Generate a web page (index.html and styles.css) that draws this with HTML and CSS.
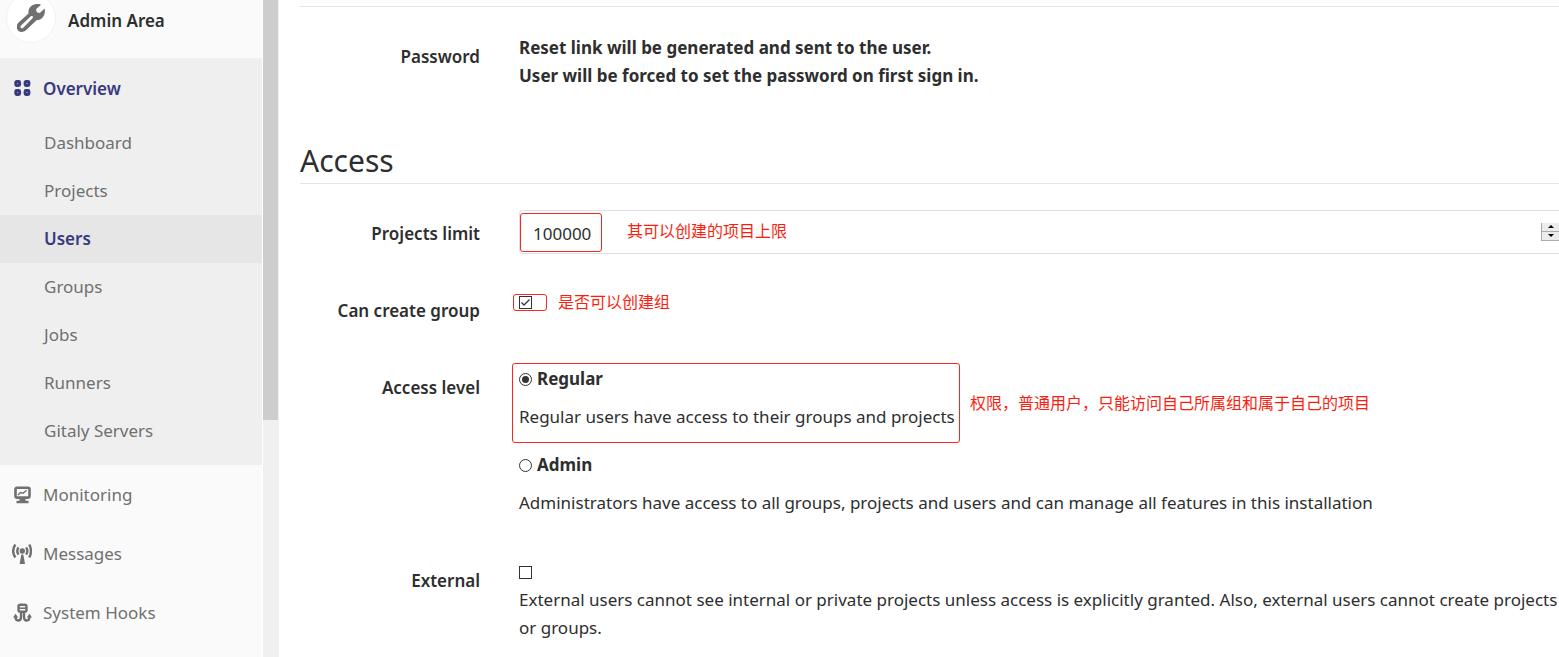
FILE: index.html
```html
<!DOCTYPE html>
<html lang="en">
<head>
<meta charset="utf-8">
<title>Admin Area</title>
<link rel="stylesheet" href="styles.css">
</head>
<body>
<div class="layout">
  <aside class="sidebar">
    <a class="sidebar-header" href="#">
      <span class="avatar">
        <svg width="28" height="28" viewBox="0 0 28 28" aria-hidden="true">
          <path fill="#707070" fill-rule="evenodd" d="M18 0.300C20 -0.300 22.500 -0.200 24 0.700L19 5.200L19.800 8.200L22.800 9L27.600 4.500C29 11 25 16.500 19.500 16.300L9 26.300C6.500 28.500 2.800 28.500 1 26.500C-1 24 -0.800 21 1.300 18.800L11.500 9.400C11 4.500 14 1.300 18 0.300ZM13.600 12.400L4.300 21.200C3.300 22.200 3.200 23.100 3.900 23.800C4.600 24.500 5.500 24.500 6.300 23.700L15.500 14.200C16.800 12.700 15.200 11.100 13.600 12.400Z"/>
        </svg>
      </span>
      <span class="sidebar-title">Admin Area</span>
    </a>
    <nav>
      <ul class="nav-list">
        <li class="nav-group">
          <a class="nav-link nav-link-active" href="#">
            <svg width="20" height="20" viewBox="0 0 20 20" fill="#9c9cc0" stroke="#393982" stroke-width="2.800" aria-hidden="true">
              <rect x="3.700" y="2.500" width="4" height="4" rx="1"/><rect x="13" y="2.500" width="4" height="4" rx="1"/>
              <rect x="3.700" y="11.500" width="4" height="4" rx="1"/><rect x="13" y="11.500" width="4" height="4" rx="1"/>
            </svg>
            Overview
          </a>
          <ul class="sub-list">
            <li><a class="sub-link" href="#">Dashboard</a></li>
            <li><a class="sub-link" href="#">Projects</a></li>
            <li><a class="sub-link sub-link-active" href="#">Users</a></li>
            <li><a class="sub-link" href="#">Groups</a></li>
            <li><a class="sub-link" href="#">Jobs</a></li>
            <li><a class="sub-link" href="#">Runners</a></li>
            <li><a class="sub-link" href="#">Gitaly Servers</a></li>
          </ul>
        </li>
        <li>
          <a class="nav-link" href="#">
            <svg width="20" height="20" viewBox="0 0 20 20" fill="none" stroke="#707070" aria-hidden="true">
              <rect x="3.500" y="2.800" width="14" height="9.800" rx="1.500" stroke-width="2.600"/>
              <path d="M6 10L8.500 7.500L11 8.200L14.500 5.200" stroke-width="1.500"/>
              <path d="M7.500 14.500h6M4.500 17h12" stroke-width="2.500"/>
            </svg>
            Monitoring
          </a>
        </li>
        <li>
          <a class="nav-link" href="#">
            <svg width="20" height="20" viewBox="0 0 20 20" fill="none" stroke="#707070" aria-hidden="true">
              <circle cx="10.300" cy="7" r="2.700" fill="#707070" stroke="none"/>
              <path d="M9.300 10.500h2l1.700 9.500h-5.400z" fill="#707070" stroke="none"/>
              <path d="M6.500 3.300Q4 7 6.500 10.700M14.100 3.300Q16.600 7 14.100 10.700M3.300 0.500Q-0.900 7 3.300 13.500M17.300 0.500Q20.700 7 17.300 13.500" stroke-width="2.400"/>
            </svg>
            Messages
          </a>
        </li>
        <li>
          <a class="nav-link" href="#">
            <svg width="20" height="20" viewBox="0 0 20 20" fill="none" stroke="#707070" aria-hidden="true">
              <rect x="6.500" y="1.700" width="8" height="7" rx="2" stroke-width="2.400"/>
              <path d="M6.500 5.200h8" stroke-width="1.600"/>
              <path d="M9 9.500v4.500Q9 17.500 6.200 17.500Q3.500 17.500 3.500 13.500M12 9.500v4.500Q12 17.500 14.800 17.500Q17.500 17.500 17.500 13.500" stroke-width="2.400"/>
              <path d="M1 14.500L3.500 10.800L6.300 14.500zM14.700 14.500L17.500 10.800L20 14.500z" fill="#707070" stroke="none"/>
            </svg>
            System Hooks
          </a>
        </li>
      </ul>
    </nav>
  </aside>
  <div class="scrollbar"><div class="scrollbar-thumb"></div></div>
  <main class="content">
    <form>
      <div class="section-end"></div>
      <section class="rows">
        <div class="row">
          <span class="label">Password</span>
          <div class="field"><strong>Reset link will be generated and sent to the user.<br>User will be forced to set the password on first sign in.</strong></div>
        </div>
      </section>
      <h2 class="legend">Access</h2>
      <section class="rows">
        <div class="row">
          <label class="label" for="limit">Projects limit</label>
          <div class="number">
            <input class="number-input" id="limit" type="number" value="100000">
            <span class="spinner">
              <button class="spin" type="button" aria-label="Increase"><svg width="6" height="4" viewBox="0 0 6 4"><path d="M3 0L6 3H0z"/></svg></button>
              <button class="spin" type="button" aria-label="Decrease"><svg width="6" height="4" viewBox="0 0 6 4"><path d="M0 0H6L3 3z"/></svg></button>
            </span>
            <span class="mark mark-limit"></span>
            <span class="note note-limit" lang="zh">其可以创建的项目上限</span>
          </div>
        </div>
        <div class="row">
          <label class="label" for="group">Can create group</label>
          <div class="field">
            <div class="option"><input class="check" id="group" type="checkbox" checked></div>
            <span class="mark mark-group"></span>
            <span class="note note-group" lang="zh">是否可以创建组</span>
          </div>
        </div>
        <div class="row">
          <span class="label">Access level</span>
          <div class="field levels">
            <div class="level">
              <label class="option"><input class="radio" type="radio" name="level" checked><strong>Regular</strong></label>
              <p class="help">Regular users have access to their groups and projects</p>
              <span class="mark mark-level"></span>
              <span class="note note-level" lang="zh">权限，普通用户，只能访问自己所属组和属于自己的项目</span>
            </div>
            <div class="level">
              <label class="option"><input class="radio" type="radio" name="level"><strong>Admin</strong></label>
              <p class="help">Administrators have access to all groups, projects and users and can manage all features in this installation</p>
            </div>
          </div>
        </div>
        <div class="row">
          <label class="label" for="external">External</label>
          <div class="field">
            <div class="option"><input class="check" id="external" type="checkbox"></div>
            <p>External users cannot see internal or private projects unless access is explicitly granted. Also, external users cannot create projects or groups.</p>
          </div>
        </div>
      </section>
    </form>
  </main>
</div>
</body>
</html>
```
FILE: styles.css
```css
* { box-sizing: border-box; }
body {
  margin: 0;
  overflow: hidden;
  background: #fff;
  color: #2e2e2e;
  font: 17px/28px "Noto Sans", "Noto Sans CJK SC", sans-serif;
}
a { color: inherit; text-decoration: none; }
ul { list-style: none; margin: 0; padding: 0; }
p { margin: 0; }
.layout { display: flex; height: 100vh; }

.sidebar { flex: 0 0 262px; overflow: hidden; background: #fafafa; color: #707070; }
.sidebar-header {
  display: flex; align-items: center; gap: 12px;
  margin-top: -7px; padding: 0 6px 15px; color: #2e2e2e; font-weight: 600;
}
.avatar {
  display: flex; align-items: center; justify-content: center;
  width: 50px; height: 50px; border: 1px solid #f2f2f2; border-radius: 50%; background: #fff;
}
.sidebar-title { padding-top: 5px; }
.nav-link { display: flex; align-items: center; gap: 11px; height: 59px; padding-left: 12px; }
.nav-group { padding-bottom: 10px; background: #efefef; }
.nav-link-active { height: 61px; color: #393982; font-weight: 600; }
.sub-link { display: block; padding: 10px 0 10px 44px; }
.sub-link-active { background: #e6e6e6; color: #393982; font-weight: 600; }

.scrollbar { flex: 0 0 17px; padding: 0 1px 0 0; border-left: 1px solid #fff; background: #f0f0f0; }
.scrollbar-thumb { height: 64vh; background: #cdcdcd; }

.content { flex: 1; min-width: 0; padding-left: 21px; }
.section-end { height: 7px; margin-bottom: 26px; border-bottom: 1px solid #e5e5e5; }
.rows { display: grid; gap: 33px; }
.row { display: grid; grid-template-columns: 180px minmax(0, 1fr); column-gap: 39px; min-height: 44px; }
.label { padding-top: 10px; text-align: right; font-weight: 600; }
.field { position: relative; padding-top: 1px; }
.legend {
  margin: 50px 0 26px; padding-bottom: 2px; border-bottom: 1px solid #e5e5e5;
  font-size: 30px; line-height: 41px; font-weight: 400;
}

.number { position: relative; display: flex; align-items: center; height: 44px; border: 1px solid #dfdfdf; border-right: 0; border-radius: 4px 0 0 4px; }
.number-input {
  flex: 1; min-width: 0; height: 42px; padding: 2px 13px 0; border: 0; outline: 0; background: none;
  color: #2e2e2e; font: inherit; appearance: textfield;
}
.number-input::-webkit-inner-spin-button { appearance: none; margin: 0; }
.spinner { display: grid; gap: 1px; width: 18px; padding: 0 0 1px 1px; background: #ababab; }
.spin { display: flex; align-items: center; justify-content: center; height: 8px; padding: 0; border: 0; background: #ececec; }

.option { display: flex; align-items: center; gap: 5px; height: 28px; }
.check, .radio { appearance: none; flex: none; width: 13px; height: 13px; margin: 0; border: 1px solid #333; background: #fff; }
.check:checked {
  background: url("data:image/svg+xml,%3Csvg xmlns='http://www.w3.org/2000/svg' viewBox='0 0 11 11'%3E%3Cpath d='M1.500 5.500L4 8L9.500 2.500' fill='none' stroke='%23333' stroke-width='1.300'/%3E%3C/svg%3E");
}
.radio { border-radius: 50%; }
.radio:checked { background: #333; background-clip: content-box; padding: 2px; }
.levels { display: grid; gap: 20px; padding-bottom: 7px; }
.level { position: relative; }
.help { margin-top: 10px; }

.mark { position: absolute; border: 1px solid #f5281e; border-radius: 3px; pointer-events: none; }
.note { position: absolute; color: #fa1e0f; font: 16px/24px "Noto Sans CJK SC", sans-serif; white-space: nowrap; }
.mark-limit { left: 0; top: 2px; width: 82px; height: 39px; }
.note-limit { left: 107px; top: 7px; }
.mark-group { left: -6px; top: 7px; width: 34px; height: 17px; }
.note-group { left: 39px; top: 2px; }
.mark-level { left: -7px; top: -2px; width: 448px; height: 80px; }
.note-level { left: 451px; top: 25px; }
```
